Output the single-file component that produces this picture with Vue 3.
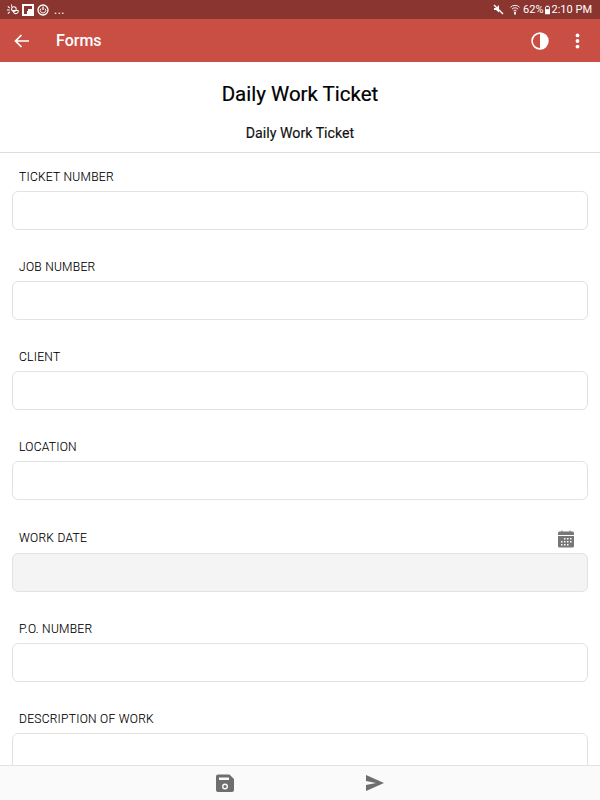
<script setup>
const fields = [
  { label: "TICKET NUMBER" },
  { label: "JOB NUMBER" },
  { label: "CLIENT" },
  { label: "LOCATION" },
  { label: "WORK DATE", date: true },
  { label: "P.O. NUMBER" },
  { label: "DESCRIPTION OF WORK" },
];
</script>

<template>
  <div class="screen">
    <div class="status">
      <div class="status__left">
        <svg width="13" height="12" viewBox="0 0 14 12" class="st-ic">
          <path d="M7 6.500h6a2.500 2.500 0 0 1-5 1.500" fill="none" stroke="#fff" stroke-width="1.100" />
          <circle cx="8.500" cy="5" r="2.500" fill="none" stroke="#fff" stroke-width="1.100" />
          <path d="M1 6h3M2 2l2 2M6 0v2.500M2 10l2-2" stroke="#fff" stroke-width="1.100" fill="none" />
        </svg>
        <span class="flip"><svg width="8" height="8" viewBox="0 0 8 8"><path d="M0 0h8v3H4v2H3v3H0z" fill="#8a352f" /></svg></span>
        <svg width="12" height="12" viewBox="0 0 12 12">
          <circle cx="6" cy="6" r="5" fill="none" stroke="#fff" stroke-width="1.300" />
          <path d="M6 2.500v3.500" stroke="#fff" stroke-width="1.300" />
          <path d="M3.900 4.600a2.700 2.700 0 1 0 4.200 0" fill="none" stroke="#fff" stroke-width="1" />
        </svg>
        <span class="dots">...</span>
      </div>
      <div class="status__right">
        <svg width="11" height="11" viewBox="0 0 11 11">
          <path d="M1 4h2l3-3v7.500L3 6H1z" fill="#fff" />
          <path d="M1 1l9 9" stroke="#fff" stroke-width="1.400" />
        </svg>
        <svg class="wifi" width="10" height="12" viewBox="0 0 11 12">
          <path d="M0.500 3a7 7 0 0 1 10 0M2.200 5a4.600 4.600 0 0 1 6.600 0M3.800 7a2.300 2.300 0 0 1 3.400 0" fill="none" stroke="#fff" stroke-width="1" />
          <path d="M4.500 8h2v3h-2z" fill="#fff" />
        </svg>
        <span class="pct">62%</span>
        <svg class="batt" width="5" height="10" viewBox="0 0 6 10">
          <path d="M1.500 0h3v1H6v9H0V1h1.500z" fill="#fff" />
          <path d="M1 1.500h4V4H1z" fill="#8a352f" />
        </svg>
        <span>2:10 PM</span>
      </div>
    </div>

    <header class="toolbar">
      <svg class="back" width="16" height="14" viewBox="0 0 16 14">
        <path d="M15 7H2M7.500 1L1.500 7l6 6" fill="none" stroke="#fff" stroke-width="1.700" />
      </svg>
      <span class="toolbar__title">Forms</span>
      <svg class="contrast" width="18" height="18" viewBox="0 0 18 18">
        <circle cx="9" cy="9" r="7.900" fill="none" stroke="#fff" stroke-width="1.600" />
        <path d="M9 1a8 8 0 0 1 0 16z" fill="#fff" />
      </svg>
      <svg class="more" width="5" height="16" viewBox="0 0 5 16">
        <circle cx="2.500" cy="2.400" r="1.900" fill="#fff" />
        <circle cx="2.500" cy="8" r="1.900" fill="#fff" />
        <circle cx="2.500" cy="13.600" r="1.900" fill="#fff" />
      </svg>
    </header>

    <main class="content">
      <div class="heading">
        <h1>Daily Work Ticket</h1>
        <h2>Daily Work Ticket</h2>
      </div>
      <div class="form">
        <div v-for="f in fields" :key="f.label" :class="['field', { 'field--date': f.date }]">
          <div class="field__label">
            <span>{{ f.label }}</span>
            <svg v-if="f.date" width="18" height="18" viewBox="0 0 18 18">
              <path d="M5 0.500v3M13 0.500v3" stroke="#777" stroke-width="1" />
              <path d="M2.500 1.500h13A1.500 1.500 0 0 1 17 3v2H1V3a1.500 1.500 0 0 1 1.500-1.500z" fill="#777" />
              <path d="M1 6h16v10a1.500 1.500 0 0 1-1.500 1.500h-13A1.500 1.500 0 0 1 1 16z" fill="#777" />
              <path d="M7 8h1.500v1.500H7zM10 8h1.500v1.500H10zM13 8h1.500v1.500H13zM4 11h1.500v1.500H4zM7 11h1.500v1.500H7zM10 11h1.500v1.500H10zM13 11h1.500v1.500H13zM4 14h1.500v1.500H4zM7 14h1.500v1.500H7zM10 14h1.500v1.500H10z" fill="#fff" />
            </svg>
          </div>
          <div class="field__box"></div>
        </div>
      </div>
    </main>

    <footer class="actions">
      <svg width="18" height="18" viewBox="0 0 18 18">
        <path d="M2 0.500h11.500L18 5v11a2 2 0 0 1-2 2H2a2 2 0 0 1-2-2V2.500a2 2 0 0 1 2-2z" fill="#6e6e6e" />
        <path d="M3 3.500h10v2.500H3z" fill="#fafafa" />
        <circle cx="9" cy="12.500" r="2.300" fill="none" stroke="#fafafa" stroke-width="1.400" />
      </svg>
      <svg width="18" height="16" viewBox="0 0 18 16">
        <path d="M0 0l18 8L0 16v-6L10 8 0 6z" fill="#6e6e6e" />
      </svg>
    </footer>
  </div>
</template>

<style scoped>
.screen {
  width: 600px;
  height: 800px;
  display: flex;
  flex-direction: column;
  overflow: hidden;
  background: #fff;
  font-family: Roboto, "Liberation Sans", sans-serif;
  color: #111;
}

.status {
  height: 19px;
  flex: none;
  background: #8a352f;
  color: #fff;
  font-size: 11px;
  display: flex;
  align-items: center;
  justify-content: space-between;
  padding: 0 8px 0 6px;
}

.status__left,
.status__right {
  display: flex;
  align-items: center;
}

.status__left {
  gap: 3px;
}

.flip {
  width: 12px;
  height: 12px;
  background: #fff;
  display: flex;
  align-items: center;
  justify-content: center;
}

.dots {
  margin-left: 2px;
  font-size: 12px;
  letter-spacing: 0.5px;
}

.wifi {
  margin-left: 6px;
}

.pct {
  margin-left: 3px;
}

.batt {
  margin: 0 2px 0 1px;
}

.toolbar {
  height: 43px;
  flex: none;
  background: #c94f45;
  display: flex;
  align-items: center;
  color: #fff;
  padding: 0 20px 0 14px;
}

.toolbar__title {
  margin-left: 26px;
  font-size: 16px;
  font-weight: 500;
}

.contrast {
  margin-left: auto;
}

.more {
  margin-left: 26px;
}

.content {
  flex: 1;
  min-height: 0;
  overflow: hidden;
}

.heading {
  height: 90px;
  border-bottom: 1px solid #ddd;
  text-align: center;
}

h1 {
  margin: 0;
  padding-top: 20px;
  font-size: 20.500px;
  line-height: 24px;
  font-weight: 400;
  color: #000;
  -webkit-text-stroke: 0.2px #000;
}

h2 {
  margin: 0;
  padding-top: 18px;
  font-size: 14.200px;
  line-height: 18px;
  font-weight: 400;
  color: #111;
  -webkit-text-stroke: 0.15px #111;
}

.form {
  padding: 0 12px;
}

.field {
  height: 90px;
  padding-top: 16px;
  box-sizing: border-box;
}

.field--date {
  height: 91px;
  padding-top: 17px;
}

.field--date + .field,
.field--date + .field + .field {
  padding-top: 17px;
}

.field__label {
  height: 16px;
  padding: 0 13px 0 7px;
  display: flex;
  align-items: center;
  justify-content: space-between;
  font-size: 12px;
  line-height: 16px;
  letter-spacing: 0.28px;
  font-weight: 300;
  color: #000;
  -webkit-text-stroke: 0.1px #000;
}

.field__label svg {
  margin-top: 1px;
}

.field__box {
  margin-top: 6px;
  height: 39px;
  box-sizing: border-box;
  border: 1px solid #e2e2e2;
  border-radius: 6px;
  background: #fff;
}

.field--date .field__box {
  margin-top: 7px;
  background: #f4f4f4;
}

.actions {
  height: 35px;
  flex: none;
  background: #fafafa;
  border-top: 1px solid #e3e3e3;
  box-sizing: border-box;
  display: flex;
  align-items: center;
  padding-left: 216px;
  gap: 132px;
}
</style>
